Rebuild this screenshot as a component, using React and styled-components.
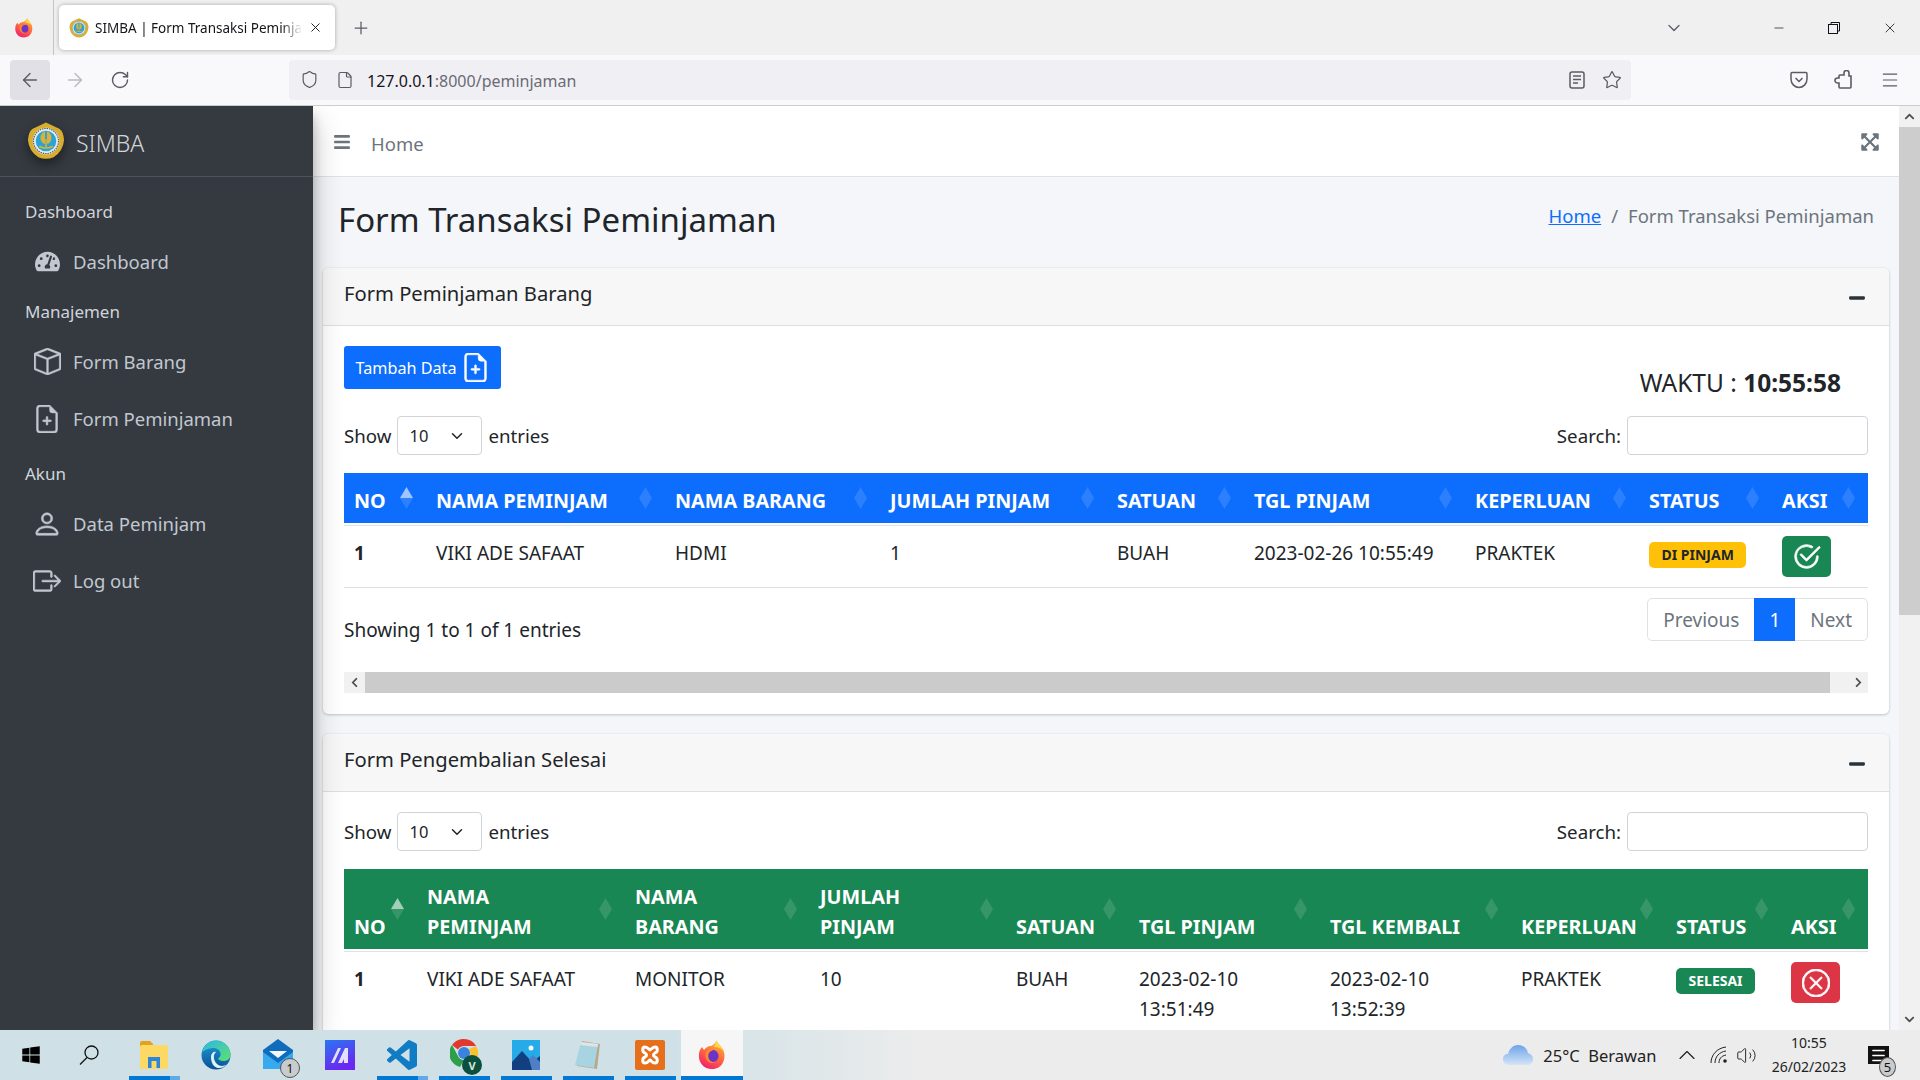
import React from "react";
import styled, { createGlobalStyle } from "styled-components";
import {
  ArrowLeft,
  ArrowRight,
  RotateCw,
  Shield,
  File,
  Star,
  Plus,
  X,
  ChevronDown,
  Minus,
  Menu as MenuIcon,
  ChevronUp,
  Volume2,
} from "lucide-react";
import {
  BsBox,
  BsFileEarmarkPlus,
  BsPerson,
  BsBoxArrowRight,
  BsCheck2Circle,
  BsXCircle,
} from "react-icons/bs";
import {
  FaBars,
  FaExpandArrowsAlt,
  FaMinus,
  FaWindows,
  FaChevronUp,
  FaChevronDown,
  FaChevronLeft,
  FaChevronRight,
  FaTachometerAlt,
} from "react-icons/fa";

const GlobalStyle = createGlobalStyle`
  html, body {
    margin: 0;
    padding: 0;
    overflow: hidden;
    background: #f4f6f9;
  }
  * {
    box-sizing: border-box;
  }
`;

const FONT = `"Noto Sans", "Open Sans", sans-serif`;

const borrowCols = [82, 239, 215, 227, 137, 221, 174, 133, 96];
const returnCols = [73, 208, 185, 196, 123, 191, 191, 155, 115, 87];

function Logo({ size }) {
  return (
    <svg width={size} height={size} viewBox="0 0 40 40">
      <path d="M20 0.5 L34 7 Q38.5 10 39 19 Q38 31 28 37 Q20 40.5 12 37 Q2 31 1 19 Q1.5 10 6 7 Z" fill="#d9ae2e" />
      <circle cx="20" cy="20" r="14" fill="#e4eaec" />
      <circle cx="20" cy="20" r="13.2" fill="none" stroke="#4a5a68" strokeWidth="1.2" strokeDasharray="1.5 1" />
      <circle cx="20" cy="20" r="10.8" fill="#2aa3d6" />
      <path d="M19 10 C15 11 13 16 15 20 C16 22 17.5 23 19 23 Z M21 10 C25 11 27 16 25 20 C24 22 22.5 23 21 23 Z" fill="#d8b23a" />
      <path d="M13 25.5 C16.5 28 23.5 28 27 25.5" fill="none" stroke="#d8b23a" strokeWidth="1.8" />
      <rect x="19.2" y="18" width="1.6" height="9" fill="#d8b23a" />
    </svg>
  );
}

function FirefoxIcon({ size }) {
  const id = `ff${size}`;
  return (
    <svg width={size} height={size} viewBox="0 0 32 32">
      <defs>
        <linearGradient id={id} x1="0.8" y1="0" x2="0.3" y2="1">
          <stop offset="0" stopColor="#ffbb38" />
          <stop offset="0.5" stopColor="#ff6a3d" />
          <stop offset="1" stopColor="#f0206f" />
        </linearGradient>
      </defs>
      <path d="M21 0.5 C22 4 27 7 28.5 12 C31 19 28 31 16 31 C7 31 2 24 2 17 C2 12 3.5 9.5 5.5 7.5 C6 9 6.8 10 7.8 10.5 C9.5 7.5 13 6 16 6 C18 4.5 20 3 21 0.5 Z" fill={`url(#${id})`} />
      <path d="M21 0.5 C22 4 27 7 28.5 12 C26 9 23 7.5 18 7.5 C19 5 20.5 3 21 0.5 Z" fill="#ffd84a" />
      <circle cx="16.5" cy="17" r="6.5" fill="#6b34c4" />
      <path d="M9 14 C11 10 16 9 20 10.5 C15 11 12 13 12 17 C12 21 15 24 20 24 C14 26 8 22 9 14 Z" fill="#ff8a2c" />
    </svg>
  );
}

function ExplorerIcon() {
  return (
    <svg width="30" height="30" viewBox="0 0 30 30">
      <path d="M1 3 Q1 1 3 1 H11 L14 4 V8 H1 Z" fill="#e3a21a" />
      <rect x="1" y="5" width="28" height="24" rx="2" fill="#fcd964" />
      <path d="M9 17 H21 V28 H17.5 V21 H12.5 V28 H9 Z" fill="#2f86d8" />
    </svg>
  );
}

function EdgeIcon() {
  return (
    <svg width="30" height="30" viewBox="0 0 30 30">
      <defs>
        <linearGradient id="edgeA" x1="0" y1="0" x2="0" y2="1">
          <stop offset="0" stopColor="#1d9fd8" />
          <stop offset="1" stopColor="#0b4f96" />
        </linearGradient>
        <linearGradient id="edgeB" x1="0" y1="0" x2="1" y2="1">
          <stop offset="0" stopColor="#2cb7e8" />
          <stop offset="1" stopColor="#5fe06e" />
        </linearGradient>
      </defs>
      <circle cx="15" cy="15" r="14.5" fill="url(#edgeA)" />
      <path d="M1 12 C3 5 9 0.5 15 0.5 C23 0.5 29.5 7 29.5 14.5 C29.5 19 26 21 22.5 21 C19.5 21 17.5 20 17 18.5 C19 17.5 20 15.5 19.5 13 C18.5 8.5 13 7 8.5 8.5 C5 9.5 2.5 11 1 12 Z" fill="url(#edgeB)" />
      <path d="M10 17 C10 13 13 11 15 12 C12 14 12 20 16 24 C19 27 24 26 26 24 C22 29 16 29 13 26 C11 24 10 20 10 17 Z" fill="#dff3f7" />
    </svg>
  );
}

function MailIcon() {
  return (
    <svg width="30" height="32" viewBox="0 0 30 32">
      <path d="M0 11 L15 0 L30 11 V30 H0 Z" fill="#0f6cbd" />
      <path d="M0 13 L15 24 L30 13 V30 H0 Z" fill="#36a9ef" />
      <path d="M6 12 H24 L15 19 Z" fill="#f3f7fa" />
    </svg>
  );
}

function PurpleIcon() {
  return (
    <svg width="30" height="30" viewBox="0 0 30 30">
      <defs>
        <linearGradient id="purple" x1="0" y1="0" x2="0.4" y2="1">
          <stop offset="0" stopColor="#2a76f2" />
          <stop offset="1" stopColor="#6a28f0" />
        </linearGradient>
      </defs>
      <rect width="30" height="30" fill="url(#purple)" />
      <path d="M6 23 L13 8 H16 L9 23 Z M13 23 L20 8 H23 V23 H19 V19 L17 23 Z" fill="#f3f0ff" opacity="0.9" />
    </svg>
  );
}

function VsCodeIcon() {
  return (
    <svg width="30" height="30" viewBox="0 0 24 24">
      <path
        fill="#0f7cc4"
        d="M23.15 2.587L18.21.21a1.494 1.494 0 0 0-1.705.29l-9.46 8.63-4.12-3.128a.999.999 0 0 0-1.276.057L.327 7.261A1 1 0 0 0 .326 8.74L3.899 12 .326 15.26a1 1 0 0 0 .001 1.479L1.65 17.94a.999.999 0 0 0 1.276.057l4.12-3.128 9.46 8.63a1.492 1.492 0 0 0 1.704.29l4.942-2.377A1.5 1.5 0 0 0 24 20.06V3.939a1.5 1.5 0 0 0-.85-1.352zm-5.146 14.861L10.826 12l7.178-5.448v10.896z"
      />
    </svg>
  );
}

function ChromeIcon() {
  return (
    <ChromeWrap>
      <svg width="28" height="28" viewBox="0 0 28 28">
        <path d="M14 0 A14 14 0 0 1 26.1 7 H14 A7 7 0 0 0 7.9 10.5 L2 6 A14 14 0 0 1 14 0 Z" fill="#e3382d" />
        <path d="M2 6 L8 17 A7 7 0 0 0 14 21 L10 28 A14 14 0 0 1 2 6 Z" fill="#2f9e4a" />
        <path d="M26.1 7 A14 14 0 0 1 12 28 L19 18 A7 7 0 0 0 19 10 Z" fill="#fbc02d" />
        <circle cx="14" cy="14" r="6" fill="#3b82e0" />
      </svg>
      <ChromeUser>V</ChromeUser>
    </ChromeWrap>
  );
}

function PhotosIcon() {
  return (
    <svg width="28" height="30" viewBox="0 0 28 30">
      <rect width="28" height="30" fill="#27aae8" />
      <circle cx="19" cy="8" r="2.5" fill="#f4fbff" />
      <path d="M0 22 L10 11 L20 22 L28 16 V30 H0 Z" fill="#123f80" />
      <path d="M17 19 L21 15 L28 22 V30 H20 Z" fill="#4f7fc4" />
    </svg>
  );
}

function NotepadIcon() {
  return (
    <svg width="28" height="30" viewBox="0 0 28 30">
      <path d="M8 1 L26 4 L23 29 L3 26 Z" fill="#b9a88a" />
      <path d="M7 2 L24 4 L20 28 L1 25 Z" fill="#a8d4e2" />
      <path d="M7 2 L24 4 L23.5 7 L6.5 5 Z" fill="#e0e4e4" />
    </svg>
  );
}

function XamppIcon() {
  return (
    <svg width="30" height="30" viewBox="0 0 30 30">
      <rect width="30" height="30" rx="2" fill="#e66f1c" />
      <path
        d="M10 7 C7 7 7 12 10 13 C12 14 12 16 10 17 C7 18 7 23 10 23 C13 23 14 20 15 20 C16 20 17 23 20 23 C23 23 23 18 20 17 C18 16 18 14 20 13 C23 12 23 7 20 7 C17 7 16 10 15 10 C14 10 13 7 10 7 Z"
        fill="none"
        stroke="#fff"
        strokeWidth="3"
      />
    </svg>
  );
}

function CloudIcon() {
  return (
    <svg width="30" height="22" viewBox="0 0 30 22">
      <defs>
        <linearGradient id="cloud" x1="0" y1="0" x2="0" y2="1">
          <stop offset="0" stopColor="#6ea4e8" />
          <stop offset="1" stopColor="#d3e4f8" />
        </linearGradient>
      </defs>
      <path d="M7 21 C2 21 0 18 0 15 C0 12 2 10 5 10 C6 5 10 1 15 1 C20 1 24 4 25 9 C28 10 30 12 30 15 C30 19 27 21 24 21 Z" fill="url(#cloud)" />
    </svg>
  );
}

function PocketIcon() {
  return (
    <svg width="18" height="18" viewBox="0 0 18 18" fill="none" stroke="#5b5b66" strokeWidth="1.5">
      <path d="M2 1.5 H16 Q17 1.5 17 3 V8 C17 13 13 16.5 9 16.5 C5 16.5 1 13 1 8 V3 Q1 1.5 2 1.5 Z" />
      <path d="M5.5 7 L9 10.5 L12.5 7" />
    </svg>
  );
}

function ExtensionsIcon() {
  return (
    <svg width="20" height="20" viewBox="0 0 20 20" fill="none" stroke="#5b5b66" strokeWidth="1.6">
      <path d="M10 5V3a2.5 2.5 0 0 1 5 0v3h2v11a1 1 0 0 1-1 1H6a1 1 0 0 1-1-1v-4H3.5a2.5 2.5 0 0 1 0-5H5V6a1 1 0 0 1 1-1z" />
    </svg>
  );
}

function ReaderIcon() {
  return (
    <svg width="16" height="18" viewBox="0 0 16 18" fill="none" stroke="#5b5b66" strokeWidth="1.5">
      <rect x="1" y="1" width="14" height="16" rx="2" />
      <path d="M4 5 H12 M4 8.5 H12 M4 12 H9" />
    </svg>
  );
}

function RestoreIcon() {
  return (
    <svg width="12" height="12" viewBox="0 0 12 12" fill="none" stroke="#111" strokeWidth="1">
      <rect x="0.5" y="2.5" width="9" height="9" fill="#f0f0f4" />
      <path d="M3 2.5 V0.5 H11.5 V9 H9.5" />
    </svg>
  );
}

function NetworkIcon() {
  return (
    <svg width="18" height="18" viewBox="0 0 18 18" fill="none" stroke="#222" strokeWidth="1">
      <path d="M1 17 C1 9 7 2 16 1" />
      <path d="M5 17 C5 11 9 6 16 5" />
      <path d="M9 17 C9 13 11 10 16 9" />
      <circle cx="15" cy="15" r="1.8" fill="#222" stroke="none" />
    </svg>
  );
}

function SearchGlass() {
  return (
    <GlassSvg width="20" height="20" viewBox="0 0 20 20" fill="none" stroke="#111" strokeWidth="1.3">
      <circle cx="12.5" cy="7.5" r="6.5" />
      <path d="M8 12.5 L1 19.5" />
    </GlassSvg>
  );
}

function SortedHead({ label, active }) {
  return (
    <HeadCell>
      {label}
      <SortMark $active={active} />
    </HeadCell>
  );
}

function Toolbar({ borrow }) {
  return (
    <ControlRow>
      <ControlGroup>
        Show
        <PageSize>
          10
          <ChevronDown size={18} strokeWidth={2} />
        </PageSize>
        entries
      </ControlGroup>
      <ControlGroup>
        Search:
        <SearchInput aria-label={borrow ? "search peminjaman" : "search pengembalian"} />
      </ControlGroup>
    </ControlRow>
  );
}

function BorrowCard() {
  const heads = ["NAMA PEMINJAM", "NAMA BARANG", "JUMLAH PINJAM", "SATUAN", "TGL PINJAM", "KEPERLUAN", "STATUS", "AKSI"];
  return (
    <Card>
      <CardHeader>
        <CardTitle>Form Peminjaman Barang</CardTitle>
        <FaMinus size={18} color="#2b3338" />
      </CardHeader>
      <CardBody>
        <ActionRow>
          <AddButton>
            Tambah Data
            <BsFileEarmarkPlus size={29} />
          </AddButton>
          <Clock>
            WAKTU : <b>10:55:58</b>
          </Clock>
        </ActionRow>
        <Toolbar borrow />
        <DataTable>
          <colgroup>
            {borrowCols.map((w, i) => (
              <Col key={i} $w={w} />
            ))}
          </colgroup>
          <thead>
            <tr>
              <SortedHead label="NO" active />
              {heads.map((h) => (
                <SortedHead key={h} label={h} />
              ))}
            </tr>
            <GapRow />
          </thead>
          <tbody>
            <tr>
              <Cell>
                <b>1</b>
              </Cell>
              <Cell>VIKI ADE SAFAAT</Cell>
              <Cell>HDMI</Cell>
              <Cell>1</Cell>
              <Cell>BUAH</Cell>
              <Cell>2023-02-26 10:55:49</Cell>
              <Cell>PRAKTEK</Cell>
              <Cell>
                <Badge $bg="#ffc107" $fg="#212529">DI PINJAM</Badge>
              </Cell>
              <Cell>
                <IconButton $bg="#198754">
                  <BsCheck2Circle size={29} />
                </IconButton>
              </Cell>
            </tr>
          </tbody>
        </DataTable>
        <FooterRow>
          <Info>Showing 1 to 1 of 1 entries</Info>
          <Pagination>
            <PageLink>Previous</PageLink>
            <PageLink $active>1</PageLink>
            <PageLink>Next</PageLink>
          </Pagination>
        </FooterRow>
        <HScroll>
          <HArrow>
            <FaChevronLeft size={11} />
          </HArrow>
          <HThumb />
          <HArrow $end>
            <FaChevronRight size={11} />
          </HArrow>
        </HScroll>
      </CardBody>
    </Card>
  );
}

function ReturnCard() {
  const heads = [
    ["NAMA", "PEMINJAM"],
    ["NAMA", "BARANG"],
    ["JUMLAH", "PINJAM"],
    ["SATUAN"],
    ["TGL PINJAM"],
    ["TGL KEMBALI"],
    ["KEPERLUAN"],
    ["STATUS"],
    ["AKSI"],
  ];
  return (
    <Card>
      <CardHeader>
        <CardTitle>Form Pengembalian Selesai</CardTitle>
        <FaMinus size={18} color="#2b3338" />
      </CardHeader>
      <CardBody>
        <Toolbar />
        <DataTable $green>
          <colgroup>
            {returnCols.map((w, i) => (
              <Col key={i} $w={w} />
            ))}
          </colgroup>
          <thead>
            <tr>
              <SortedHead label="NO" active />
              {heads.map((h) => (
                <SortedHead
                  key={h.join()}
                  label={h.map((part, i) => (
                    <React.Fragment key={part}>
                      {i > 0 && <br />}
                      {part}
                    </React.Fragment>
                  ))}
                />
              ))}
            </tr>
            <GapRow />
          </thead>
          <tbody>
            <tr>
              <Cell>
                <b>1</b>
              </Cell>
              <Cell>VIKI ADE SAFAAT</Cell>
              <Cell>MONITOR</Cell>
              <Cell>10</Cell>
              <Cell>BUAH</Cell>
              <Cell>
                2023-02-10
                <br />
                13:51:49
              </Cell>
              <Cell>
                2023-02-10
                <br />
                13:52:39
              </Cell>
              <Cell>PRAKTEK</Cell>
              <Cell>
                <Badge $bg="#198754" $fg="#fff">SELESAI</Badge>
              </Cell>
              <Cell>
                <IconButton $bg="#dc3545">
                  <BsXCircle size={28} />
                </IconButton>
              </Cell>
            </tr>
          </tbody>
        </DataTable>
      </CardBody>
    </Card>
  );
}

function SideLink({ icon, label }) {
  return (
    <NavItem>
      <NavIcon>{icon}</NavIcon>
      {label}
    </NavItem>
  );
}

function Sidebar() {
  return (
    <Side>
      <Brand>
        <BrandMark>
          <Logo size={38} />
        </BrandMark>
        <BrandName>SIMBA</BrandName>
      </Brand>
      <Nav>
        <NavHeader>Dashboard</NavHeader>
        <SideLink icon={<FaTachometerAlt size={25} />} label="Dashboard" />
        <NavHeader>Manajemen</NavHeader>
        <SideLink icon={<BsBox size={27} />} label="Form Barang" />
        <SideLink icon={<BsFileEarmarkPlus size={28} />} label="Form Peminjaman" />
        <NavHeader $top={5}>Akun</NavHeader>
        <SideLink icon={<BsPerson size={30} />} label="Data Peminjam" />
        <SideLink icon={<BsBoxArrowRight size={28} />} label="Log out" />
      </Nav>
    </Side>
  );
}

function BrowserChrome() {
  return (
    <>
      <TabStrip>
        <TabMenu>
          <FirefoxIcon size={20} />
        </TabMenu>
        <Tab>
          <Logo size={20} />
          <TabTitle>SIMBA | Form Transaksi Peminjaman</TabTitle>
          <X size={15} strokeWidth={1.5} color="#15141a" />
        </Tab>
        <NewTab>
          <Plus size={20} strokeWidth={1.5} color="#5b5b66" />
        </NewTab>
        <TabSpacer />
        <ChevronDown size={20} strokeWidth={1.5} color="#5b5b66" />
        <WindowButtons>
          <Minus size={14} strokeWidth={1.2} color="#111" />
          <RestoreIcon />
          <X size={16} strokeWidth={1.2} color="#111" />
        </WindowButtons>
      </TabStrip>
      <AddressRow>
        <BackButton>
          <ArrowLeft size={22} strokeWidth={1.5} color="#5b5b66" />
        </BackButton>
        <NavGlyph>
          <ArrowRight size={22} strokeWidth={1.5} color="#b9b9c0" />
        </NavGlyph>
        <NavGlyph>
          <RotateCw size={20} strokeWidth={1.7} color="#5b5b66" />
        </NavGlyph>
        <UrlBar>
          <Shield size={19} strokeWidth={1.5} color="#5b5b66" />
          <File size={18} strokeWidth={1.6} color="#5b5b66" />
          <UrlText>
            <span>127.0.0.1</span>:8000/peminjaman
          </UrlText>
          <UrlActions>
            <ReaderIcon />
            <Star size={20} strokeWidth={1.5} color="#5b5b66" />
          </UrlActions>
        </UrlBar>
        <ToolIcons>
          <PocketIcon />
          <ExtensionsIcon />
          <MenuIcon size={20} strokeWidth={1.4} color="#5b5b66" />
        </ToolIcons>
      </AddressRow>
    </>
  );
}

function Taskbar() {
  return (
    <Bar>
      <Slot $w={61}>
        <FaWindows size={20} color="#000" />
      </Slot>
      <Slot>
        <SearchGlass />
      </Slot>
      <Slot $open $split>
        <ExplorerIcon />
      </Slot>
      <Slot>
        <EdgeIcon />
      </Slot>
      <Slot>
        <MailIcon />
        <CountBadge>1</CountBadge>
      </Slot>
      <Slot>
        <PurpleIcon />
      </Slot>
      <Slot $open $split>
        <VsCodeIcon />
      </Slot>
      <Slot $open>
        <ChromeIcon />
      </Slot>
      <Slot $open>
        <PhotosIcon />
      </Slot>
      <Slot $open>
        <NotepadIcon />
      </Slot>
      <Slot $open>
        <XamppIcon />
      </Slot>
      <Slot $open $current>
        <FirefoxIcon size={30} />
      </Slot>
      <Tray>
        <CloudIcon />
        <Weather>25°C&nbsp;&nbsp;Berawan</Weather>
        <TrayIcons>
          <TrayChevron size={28} strokeWidth={1} color="#222" />
          <NetworkIcon />
          <TrayVolume size={21} strokeWidth={1.1} color="#222" />
        </TrayIcons>
        <TrayClock>
          <span>10:55</span>
          <span>26/02/2023</span>
        </TrayClock>
        <Notify>
          <MenuIcon size={17} strokeWidth={2} color="#fff" />
          <NotifyCount>5</NotifyCount>
        </Notify>
      </Tray>
    </Bar>
  );
}

export default function App() {
  return (
    <Screen>
      <GlobalStyle />
      <BrowserChrome />
      <Viewport>
        <Sidebar />
        <Main>
          <TopNav>
            <TopNavLeft>
              <FaBars size={18} color="#6c757d" />
              <HomeLink>Home</HomeLink>
            </TopNavLeft>
            <FaExpandArrowsAlt size={20} color="#6c757d" />
          </TopNav>
          <ContentHeader>
            <PageTitle>Form Transaksi Peminjaman</PageTitle>
            <Crumbs>
              <CrumbLink>Home</CrumbLink>
              <CrumbSep>/</CrumbSep>
              Form Transaksi Peminjaman
            </Crumbs>
          </ContentHeader>
          <Cards>
            <BorrowCard />
            <ReturnCard />
          </Cards>
        </Main>
        <PageScroll>
          <ScrollEnd>
            <FaChevronUp size={11} color="#505050" />
          </ScrollEnd>
          <ScrollThumb />
          <ScrollTrack />
          <ScrollEnd>
            <FaChevronDown size={11} color="#505050" />
          </ScrollEnd>
        </PageScroll>
      </Viewport>
      <Taskbar />
    </Screen>
  );
}

const Screen = styled.div`
  width: 1920px;
  height: 1080px;
  display: flex;
  flex-direction: column;
  overflow: hidden;
  font-family: ${FONT};
  color: #212529;
`;

const TabStrip = styled.div`
  height: 55px;
  display: flex;
  align-items: center;
  background: #f0f0f1;
  padding-right: 22px;
`;

const TabMenu = styled.div`
  width: 54px;
  height: 55px;
  padding-left: 14px;
  display: flex;
  align-items: center;
  border-right: 1px solid #c4c4c8;
`;

const Tab = styled.div`
  width: 276px;
  height: 45px;
  margin-left: 5px;
  padding: 0 12px 0 10px;
  display: flex;
  align-items: center;
  gap: 6px;
  background: #fff;
  border-radius: 5px;
  box-shadow: 0 0 4px rgba(0, 0, 0, 0.3);
`;

const TabTitle = styled.div`
  flex: 1;
  font-size: 13.5px;
  white-space: nowrap;
  overflow: hidden;
  color: #15141a;
  mask-image: linear-gradient(to right, #000 90%, transparent);
`;

const NewTab = styled.div`
  margin-left: 16px;
  display: flex;
`;

const TabSpacer = styled.div`
  flex: 1;
`;

const WindowButtons = styled.div`
  width: 126px;
  margin-left: 88px;
  display: flex;
  align-items: center;
  justify-content: space-between;
`;

const AddressRow = styled.div`
  height: 51px;
  display: flex;
  align-items: center;
  background: #f9f9fb;
  border-bottom: 1px solid #ccccd0;
  padding: 0 20px 1px 10px;
`;

const BackButton = styled.div`
  width: 40px;
  height: 40px;
  display: flex;
  align-items: center;
  justify-content: center;
  background: #e0e0e6;
  border-radius: 4px;
`;

const NavGlyph = styled.div`
  width: 40px;
  margin-left: 5px;
  display: flex;
  justify-content: center;
`;

const UrlBar = styled.div`
  width: 1342px;
  height: 40px;
  margin-left: 149px;
  padding: 0 9px 0 11px;
  display: flex;
  align-items: center;
  gap: 17px;
  background: #f0f0f4;
  border-radius: 4px;
`;

const UrlText = styled.div`
  flex: 1;
  margin-left: -4px;
  padding-top: 3px;
  font-size: 16px;
  color: #6b6b74;
  span {
    color: #15141a;
  }
`;

const UrlActions = styled.div`
  display: flex;
  align-items: center;
  gap: 17px;
`;

const ToolIcons = styled.div`
  flex: 1;
  display: flex;
  align-items: center;
  justify-content: flex-end;
  gap: 26px;
`;

const Viewport = styled.div`
  flex: 1;
  min-height: 0;
  display: flex;
  overflow: hidden;
`;

const Side = styled.aside`
  width: 313px;
  flex-shrink: 0;
  background: #343a40;
  color: #c2c7d0;
  box-shadow: 0 14px 28px rgba(0, 0, 0, 0.25), 0 10px 10px rgba(0, 0, 0, 0.22);
  position: relative;
  z-index: 2;
`;

const Brand = styled.div`
  height: 71px;
  display: flex;
  align-items: center;
  padding-left: 27px;
  gap: 11px;
  border-bottom: 1px solid #4b545c;
`;

const BrandMark = styled.div`
  display: flex;
  filter: drop-shadow(0 5px 6px rgba(0, 0, 0, 0.45));
`;

const BrandName = styled.div`
  padding-top: 4px;
  font-size: 23px;
  font-weight: 300;
  color: rgba(255, 255, 255, 0.8);
`;

const Nav = styled.nav`
  padding-top: 13px;
  display: flex;
  flex-direction: column;
`;

const NavHeader = styled.div`
  height: 43px;
  margin-top: ${(p) => p.$top || 0}px;
  padding-left: 25px;
  display: flex;
  align-items: center;
  font-size: 17px;
  color: #d0d4db;
`;

const NavItem = styled.div`
  height: 57px;
  padding-left: 33px;
  display: flex;
  align-items: center;
  font-size: 18.5px;
  color: #c2c7d0;
`;

const NavIcon = styled.span`
  width: 28px;
  margin-right: 12px;
  flex-shrink: 0;
  display: flex;
  align-items: center;
  justify-content: center;
  svg {
    flex-shrink: 0;
    stroke: currentColor;
    stroke-width: 0.3;
  }
`;

const Main = styled.main`
  flex: 1;
  min-width: 0;
  background: #f4f6f9;
`;

const TopNav = styled.div`
  height: 71px;
  padding: 2px 19px 0 20px;
  display: flex;
  align-items: center;
  justify-content: space-between;
  background: #fff;
  border-bottom: 1px solid #dee2e6;
`;

const TopNavLeft = styled.div`
  display: flex;
  align-items: center;
  gap: 20px;
`;

const HomeLink = styled.div`
  padding-top: 3px;
  font-size: 18.5px;
  color: #6c757d;
`;

const ContentHeader = styled.div`
  height: 91px;
  padding: 0 25px 6px;
  display: flex;
  align-items: center;
  justify-content: space-between;
`;

const PageTitle = styled.h1`
  margin: 0;
  font-size: 33px;
  font-weight: 400;
  color: #212529;
`;

const Crumbs = styled.div`
  margin-top: -8px;
  font-size: 18.5px;
  color: #6c757d;
  white-space: nowrap;
`;

const CrumbLink = styled.a`
  color: #0d6efd;
  text-decoration: underline;
`;

const CrumbSep = styled.span`
  margin: 0 10px;
`;

const Cards = styled.div`
  padding: 0 10px;
  display: flex;
  flex-direction: column;
  gap: 20px;
`;

const Card = styled.section`
  background: #fff;
  border-radius: 5px;
  box-shadow: 0 0 1px rgba(0, 0, 0, 0.125), 0 1px 3px rgba(0, 0, 0, 0.2);
`;

const CardHeader = styled.div`
  height: 58px;
  padding: 0 23px 0 21px;
  display: flex;
  align-items: center;
  justify-content: space-between;
  background: #f7f7f7;
  border-bottom: 1px solid #dfdfdf;
  border-radius: 5px 5px 0 0;
  svg {
    margin-top: 3px;
  }
`;

const CardTitle = styled.div`
  padding-bottom: 8px;
  font-size: 20.2px;
  color: #212529;
`;

const CardBody = styled.div`
  padding: 20px 21px 21px 21px;
`;

const ActionRow = styled.div`
  height: 70px;
  padding-right: 27px;
  display: flex;
  align-items: flex-start;
  justify-content: space-between;
`;

const AddButton = styled.button`
  height: 43px;
  width: 157px;
  padding: 0;
  display: flex;
  align-items: center;
  justify-content: center;
  gap: 4px;
  border: none;
  border-radius: 3px;
  background: #0d6efd;
  color: #fff;
  font-family: ${FONT};
  font-size: 16.2px;
  svg {
    stroke: currentColor;
    stroke-width: 0.3;
  }
`;

const Clock = styled.div`
  margin-top: 18px;
  font-size: 24.5px;
  line-height: 38px;
  color: #212529;
  b {
    font-weight: 700;
  }
`;

const ControlRow = styled.div`
  height: 39px;
  margin-bottom: 18px;
  display: flex;
  align-items: center;
  justify-content: space-between;
`;

const ControlGroup = styled.label`
  display: flex;
  align-items: center;
  gap: 6px;
  font-size: 18.7px;
  color: #212529;
`;

const PageSize = styled.div`
  width: 85px;
  height: 39px;
  padding: 0 15px 0 11px;
  display: flex;
  align-items: center;
  justify-content: space-between;
  border: 1px solid #ced4da;
  border-radius: 4px;
  font-size: 16.5px;
`;

const SearchInput = styled.input`
  width: 241px;
  height: 39px;
  border: 1px solid #ced4da;
  border-radius: 4px;
  background: #fff;
`;

const DataTable = styled.table`
  width: 1524px;
  table-layout: fixed;
  border-collapse: separate;
  border-spacing: 0;
  font-size: 19px;
  line-height: 30px;
  --head: ${(p) => (p.$green ? "#198754" : "#0d6efd")};
`;

const Col = styled.col`
  width: ${(p) => p.$w}px;
`;

const HeadCell = styled.th`
  position: relative;
  padding: 13px 10px 7px;
  text-align: left;
  vertical-align: bottom;
  background: var(--head);
  color: #fff;
  font-size: 19.8px;
  font-weight: 700;
  white-space: nowrap;
`;

const SortMark = styled.i`
  position: absolute;
  top: 50%;
  right: 13px;
  width: 13px;
  height: 22px;
  margin-top: -11px;
  &::before,
  &::after {
    content: "";
    position: absolute;
    left: 0;
    width: 13px;
    height: 11px;
    background: #fff;
  }
  &::before {
    top: 0;
    clip-path: polygon(50% 0, 100% 100%, 0 100%);
    opacity: ${(p) => (p.$active ? 0.6 : 0.13)};
  }
  &::after {
    bottom: 0;
    clip-path: polygon(0 0, 100% 0, 50% 100%);
    opacity: 0.13;
  }
`;

const GapRow = styled.tr`
  height: 2px;
`;

const Cell = styled.td`
  padding: 12px 10px 8px;
  vertical-align: top;
  border-top: 1px solid #dee2e6;
  border-bottom: 1px solid #dee2e6;
  color: #212529;
`;

const Badge = styled.span`
  display: inline-block;
  padding: 0 12.5px;
  margin-top: 2px;
  font-size: 14px;
  line-height: 26px;
  font-weight: 700;
  border-radius: 5px;
  white-space: nowrap;
  background: ${(p) => p.$bg};
  color: ${(p) => p.$fg};
`;

const IconButton = styled.button`
  width: 49px;
  height: 41px;
  margin: -2px 0 2px;
  padding: 0;
  display: flex;
  align-items: center;
  justify-content: center;
  border: none;
  border-radius: 5px;
  background: ${(p) => p.$bg};
  color: #fff;
  svg {
    stroke: currentColor;
    stroke-width: 0.4;
  }
`;

const FooterRow = styled.div`
  height: 84px;
  padding-top: 10px;
  display: flex;
  align-items: flex-start;
  justify-content: space-between;
`;

const Info = styled.div`
  margin-top: 17px;
  font-size: 19px;
  line-height: 30px;
`;

const Pagination = styled.div`
  display: flex;
  border: 1px solid #dee2e6;
  border-radius: 5px;
  height: 43px;
`;

const PageLink = styled.div`
  padding: 0 15px;
  display: flex;
  align-items: center;
  margin: -1px 0;
  font-size: 19px;
  color: ${(p) => (p.$active ? "#fff" : "#6c757d")};
  background: ${(p) => (p.$active ? "#0d6efd" : "transparent")};
`;

const HScroll = styled.div`
  height: 21px;
  display: flex;
  background: #f1f1f1;
`;

const HArrow = styled.div`
  width: ${(p) => (p.$end ? 38 : 21)}px;
  padding-right: ${(p) => (p.$end ? 4 : 0)}px;
  flex-shrink: 0;
  display: flex;
  align-items: center;
  justify-content: ${(p) => (p.$end ? "flex-end" : "center")};
  color: #505050;
`;

const HThumb = styled.div`
  flex: 1;
  background: #cbcbcb;
`;

const PageScroll = styled.div`
  width: 21px;
  flex-shrink: 0;
  display: flex;
  flex-direction: column;
  background: #f1f1f1;
`;

const ScrollEnd = styled.div`
  height: 21px;
  display: flex;
  align-items: center;
  justify-content: center;
`;

const ScrollThumb = styled.div`
  height: 488px;
  background: #cdcdcd;
`;

const ScrollTrack = styled.div`
  flex: 1;
`;

const Bar = styled.footer`
  height: 50px;
  flex-shrink: 0;
  display: flex;
  align-items: stretch;
  background: linear-gradient(to right, #cfe1e7 0%, #cfe1e7 35%, #ececec 48%, #ececec 100%);
`;

const Slot = styled.div`
  position: relative;
  width: ${(p) => p.$w || 62}px;
  display: flex;
  align-items: center;
  justify-content: center;
  background: ${(p) => (p.$current ? "#f6f6f6" : "transparent")};
  &::after {
    content: "";
    display: ${(p) => (p.$open ? "block" : "none")};
    position: absolute;
    left: ${(p) => (p.$current ? 0 : 6)}px;
    right: ${(p) => (p.$current ? 0 : 5)}px;
    bottom: 0;
    height: 4px;
    background: ${(p) =>
      p.$split
        ? "linear-gradient(to right, #0078d4 80%, #63a9e5 80%)"
        : "#0078d4"};
  }
`;

const GlassSvg = styled.svg`
  margin-left: -6px;
`;

const CountBadge = styled.span`
  position: absolute;
  left: 33px;
  bottom: 2px;
  width: 20px;
  height: 20px;
  display: flex;
  align-items: center;
  justify-content: center;
  border: 1px solid #555;
  border-radius: 50%;
  background: #c8cccd;
  font-size: 12px;
  color: #111;
`;

const ChromeWrap = styled.div`
  position: relative;
  display: flex;
  margin-top: -4px;
`;

const ChromeUser = styled.span`
  position: absolute;
  right: -4px;
  bottom: -8px;
  width: 20px;
  height: 20px;
  display: flex;
  align-items: center;
  justify-content: center;
  border-radius: 50%;
  background: #0b4f3f;
  color: #d6e4dc;
  font-size: 11px;
  font-weight: 700;
`;

const Tray = styled.div`
  flex: 1;
  display: flex;
  align-items: center;
  justify-content: flex-end;
  padding-right: 31px;
`;

const Weather = styled.div`
  margin-left: 10px;
  font-size: 16.5px;
  color: #222;
`;

const TrayIcons = styled.div`
  margin-left: 22px;
  display: flex;
  align-items: center;
`;

const TrayChevron = styled(ChevronUp)`
  margin: 0 9.5px 0 -6px;
`;

const TrayVolume = styled(Volume2)`
  margin-left: 8px;
`;

const TrayClock = styled.div`
  width: 100px;
  margin-left: 2px;
  display: flex;
  flex-direction: column;
  align-items: center;
  gap: 4px;
  font-size: 14px;
  line-height: 20px;
  color: #222;
`;

const Notify = styled.div`
  position: relative;
  width: 21px;
  height: 18px;
  margin-left: 9px;
  display: flex;
  align-items: center;
  justify-content: center;
  background: #111;
`;

const NotifyCount = styled.span`
  position: absolute;
  right: -7px;
  bottom: -13px;
  width: 17px;
  height: 20px;
  display: flex;
  align-items: center;
  justify-content: center;
  border: 1px solid #555;
  border-radius: 50%;
  background: #c8cccd;
  font-size: 13px;
  color: #111;
`;
